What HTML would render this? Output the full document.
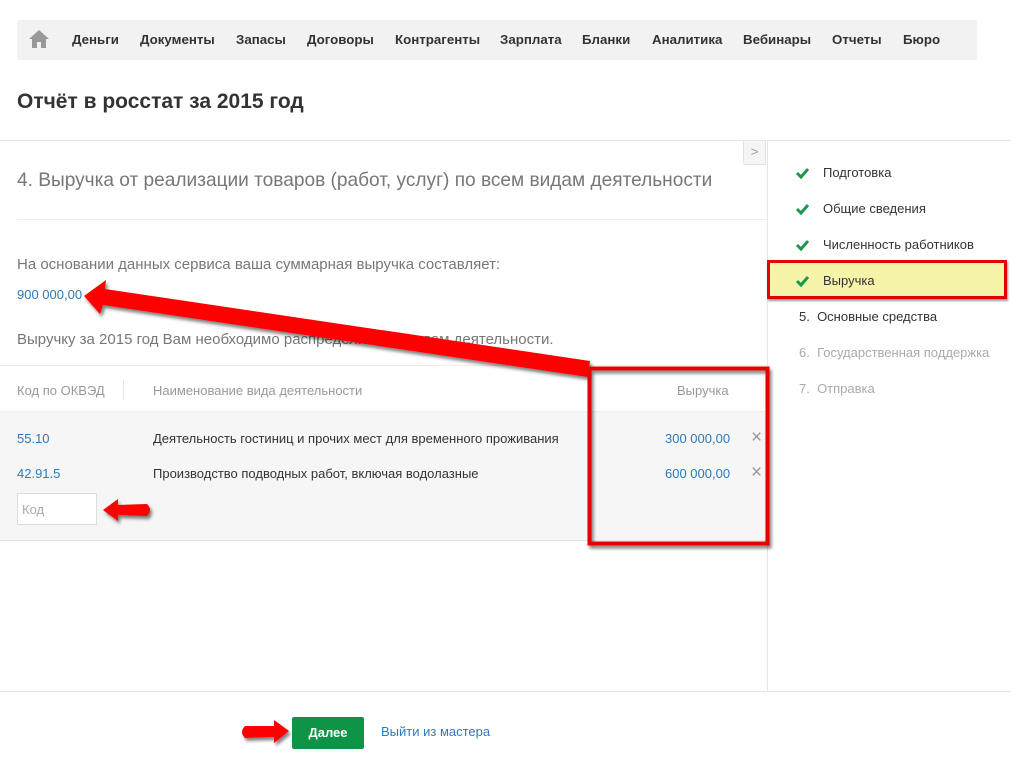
<!DOCTYPE html>
<html><head><meta charset="utf-8"><style>
*{margin:0;padding:0;box-sizing:border-box}
body{width:1011px;height:761px;position:relative;background:#fff;font-family:"Liberation Sans",Arial,sans-serif;overflow:hidden}
.a{position:absolute;white-space:nowrap}
.nav{left:17px;top:20px;width:960px;height:40px;background:#f2f2f2;border-radius:3px}
.nv{top:32px;font-size:13.3px;font-weight:bold;color:#333}
.g{color:#777;font-size:15px}
.b{color:#2a7bc0;font-size:14px}
.hl{position:absolute;background:#e6e6e6}
.step{font-size:13px;color:#333}
</style></head><body>
<div class="a nav"></div>
<svg class="a" style="left:28px;top:29px" width="22" height="20" viewBox="0 0 22 20"><path d="M11 1 L21 10 L18 10 L18 19 L13 19 L13 13 L9 13 L9 19 L4 19 L4 10 L1 10 Z" fill="#999"/></svg>
<div class="a nv" style="left:72px">Деньги</div>
<div class="a nv" style="left:140px">Документы</div>
<div class="a nv" style="left:236px">Запасы</div>
<div class="a nv" style="left:307px">Договоры</div>
<div class="a nv" style="left:395px">Контрагенты</div>
<div class="a nv" style="left:500px">Зарплата</div>
<div class="a nv" style="left:582px">Бланки</div>
<div class="a nv" style="left:652px">Аналитика</div>
<div class="a nv" style="left:743px">Вебинары</div>
<div class="a nv" style="left:832px">Отчеты</div>
<div class="a nv" style="left:903px">Бюро</div>
<div class="a" style="left:17px;top:90px;font-size:21px;font-weight:bold;color:#333">Отчёт в росстат за 2015 год</div>
<div class="hl" style="left:0;top:140px;width:1011px;height:1px"></div>
<div class="hl" style="left:767px;top:140px;width:1px;height:552px"></div>
<div class="hl" style="left:0;top:691px;width:1011px;height:1px"></div>
<div class="a" style="left:743px;top:141px;width:23px;height:24px;background:#f5f5f5;border:1px solid #e3e3e3;border-top:none;border-radius:0 0 0 3px;color:#999;font-size:13px;text-align:center;line-height:22px">&gt;</div>
<div class="a" style="left:17px;top:170px;font-size:19.1px;color:#777">4. Выручка от реализации товаров (работ, услуг) по всем видам деятельности</div>
<div class="hl" style="left:17px;top:219px;width:750px;height:1px;background:#eee"></div>
<div class="a g" style="left:17px;top:256px">На основании данных сервиса ваша суммарная выручка составляет:</div>
<div class="a b" style="left:17px;top:287px;font-size:13px">900 000,00</div>
<div class="a g" style="left:17px;top:331px">Выручку за 2015 год Вам необходимо распределить по видам деятельности.</div>
<div class="hl" style="left:0;top:365px;width:767px;height:1px;background:#eee"></div>
<div class="a g" style="left:17px;top:383px;font-size:13px;color:#999">Код по ОКВЭД</div>
<div class="hl" style="left:123px;top:380px;width:1px;height:20px;background:#e6e6e6"></div>
<div class="a g" style="left:153px;top:383px;font-size:13px;color:#999">Наименование вида деятельности</div>
<div class="a g" style="left:677px;top:383px;font-size:13px;color:#999">Выручка</div>
<div class="a" style="left:0;top:411px;width:767px;height:130px;background:#f6f6f6;border-top:1px solid #eee;border-bottom:1px solid #e6e6e6"></div>
<div class="a b" style="left:17px;top:431px;font-size:13px">55.10</div>
<div class="a" style="left:153px;top:431px;font-size:13px;color:#333">Деятельность гостиниц и прочих мест для временного проживания</div>
<div class="a b" style="left:665px;top:431px;font-size:13px">300 000,00</div>
<div class="a" style="left:751px;top:427px;font-size:19px;color:#999">×</div>
<div class="a b" style="left:17px;top:466px;font-size:13px">42.91.5</div>
<div class="a" style="left:153px;top:466px;font-size:13px;color:#333">Производство подводных работ, включая водолазные</div>
<div class="a b" style="left:665px;top:466px;font-size:13px">600 000,00</div>
<div class="a" style="left:751px;top:462px;font-size:19px;color:#999">×</div>
<div class="a" style="left:17px;top:493px;width:80px;height:32px;background:#fff;border:1px solid #ddd;color:#aaa;font-size:13px;padding:8px 4px">Код</div>

<div class="a" style="left:767px;top:260px;width:240px;height:39px;background:#f6f4a8;border:3px solid #e60000;box-shadow:1px 2px 2px rgba(0,0,0,.4)"></div>
<svg class="a" style="left:795px;top:167px" width="16" height="240" viewBox="0 0 16 240">
<g fill="none" stroke="#1a9a4a" stroke-width="3"><path d="M2 6 L6 10 L13 2"/><path d="M2 42 L6 46 L13 38"/><path d="M2 78 L6 82 L13 74"/><path d="M2 114 L6 118 L13 110"/></g></svg>
<div class="a step" style="left:823px;top:165px">Подготовка</div>
<div class="a step" style="left:823px;top:201px">Общие сведения</div>
<div class="a step" style="left:823px;top:237px">Численность работников</div>
<div class="a step" style="left:823px;top:273px">Выручка</div>
<div class="a step" style="left:799px;top:309px">5.&nbsp;&nbsp;Основные средства</div>
<div class="a step" style="left:799px;top:345px;color:#aaa">6.&nbsp;&nbsp;Государственная поддержка</div>
<div class="a step" style="left:799px;top:381px;color:#aaa">7.&nbsp;&nbsp;Отправка</div>

<div class="a" style="left:292px;top:717px;width:72px;height:32px;background:#0e9446;border-radius:2px;color:#fff;font-weight:bold;font-size:13px;text-align:center;line-height:32px">Далее</div>
<div class="a b" style="left:381px;top:724px;font-size:13px">Выйти из мастера</div>

<svg class="a" style="left:0;top:0" width="1011" height="761">
<defs><filter id="s"><feDropShadow dx="2" dy="3" stdDeviation="1.5" flood-color="#000" flood-opacity=".5"/></filter></defs>
<g filter="url(#s)" fill="#f00">
<rect x="589.5" y="368.5" width="178" height="175" fill="none" stroke="#e60000" stroke-width="4"/>
<path d="M84 296 L106 280 L105 289 L590 361 L588 377 L103 305 L100 314 Z"/>
<path d="M103 510 L118 499 L118 505 L147 504 Q153 510 147 516 L118 515 L118 521 Z"/>
<path d="M289 731 L274 720 L274 726 L245 726 Q239 732 245 738 L274 737 L274 743 Z"/>
</g></svg>
</body></html>
